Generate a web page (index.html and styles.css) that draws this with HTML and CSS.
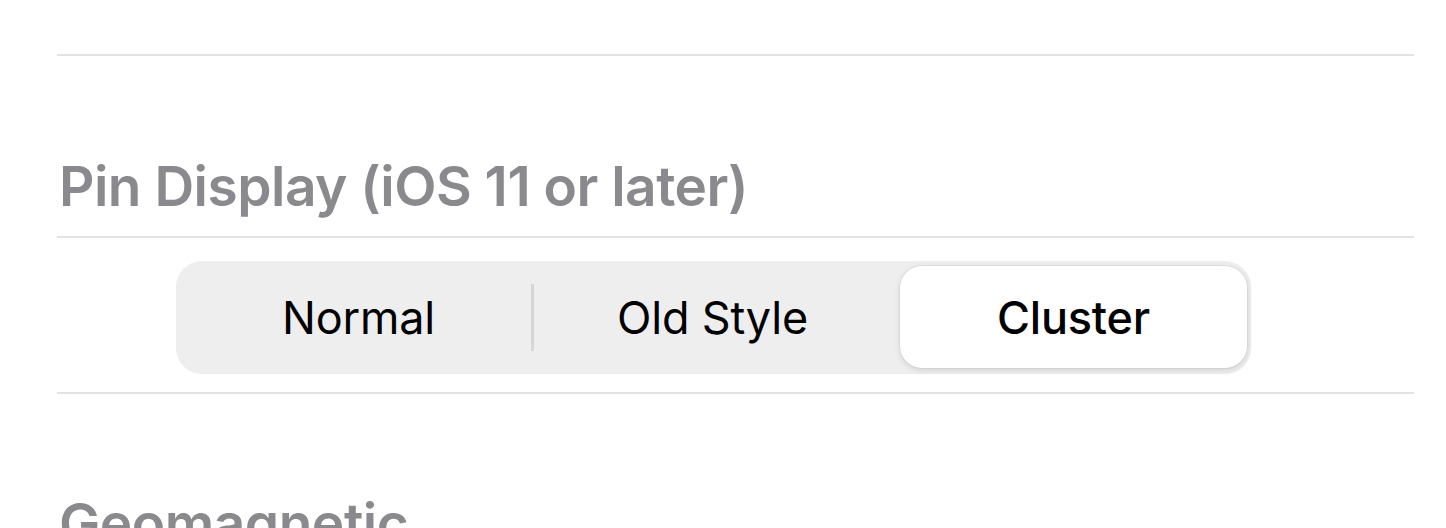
FILE: index.html
```html
<!DOCTYPE html>
<html>
<head>
<meta charset="utf-8">
<link rel="stylesheet" href="styles.css">
</head>
<body>
<div class="page">
  <div class="top-row"></div>
  <div class="section-header">Pin Display (iOS 11 or later)</div>
  <div class="control-row">
    <div class="segmented">
      <div class="segment">Normal</div>
      <div class="segment divided">Old Style</div>
      <div class="segment selected">Cluster</div>
    </div>
  </div>
  <div class="section-header next">Geomagnetic</div>
</div>
</body>
</html>
```
FILE: styles.css
```css
html, body {
  margin: 0;
  padding: 0;
  background: #ffffff;
  overflow: hidden;
}
body {
  width: 1446px;
  height: 528px;
  font-family: Inter, "Liberation Sans", sans-serif;
}
.page {
  padding-left: 57px;
  padding-right: 32px;
}
.top-row {
  height: 54px;
  border-bottom: 2px solid #e3e3e5;
}
.section-header {
  color: #8a8a8e;
  font-size: 55px;
  font-weight: 600;
  letter-spacing: -0.5px;
  padding-left: 2px;
  height: 66px;
  line-height: 66px;
  padding-top: 97px;
  padding-bottom: 17px;
  border-bottom: 2px solid #e3e3e5;
  white-space: nowrap;
}
.section-header.next {
  border-bottom: none;
  padding-top: 96px;
  padding-bottom: 0;
}
.control-row {
  padding: 23px 0 18px 119px;
  border-bottom: 2px solid #e3e3e5;
}
.segmented {
  width: 1075px;
  height: 113px;
  box-sizing: border-box;
  padding: 5px;
  background: #eeeeef;
  border-radius: 26px;
  display: grid;
  grid-template-columns: repeat(3, 1fr);
}
.segment {
  display: flex;
  align-items: center;
  justify-content: center;
  font-size: 45px;
  color: #000;
  letter-spacing: -0.2px;
}
.segment.divided {
  border-left: 3px solid #d8d8da;
  border-image: linear-gradient(to bottom, transparent 19px, #d6d6d8 19px, #d6d6d8 84px, transparent 84px) 1;
  margin-left: -5px;
}
.segment.selected {
  background: #ffffff;
  border-radius: 22px;
  margin: 0 -1px 1px 9px;
  font-weight: 500;
  box-shadow: 0 2px 6px rgba(0,0,0,0.12), 0 0 0 1px rgba(0,0,0,0.04);
}
```
